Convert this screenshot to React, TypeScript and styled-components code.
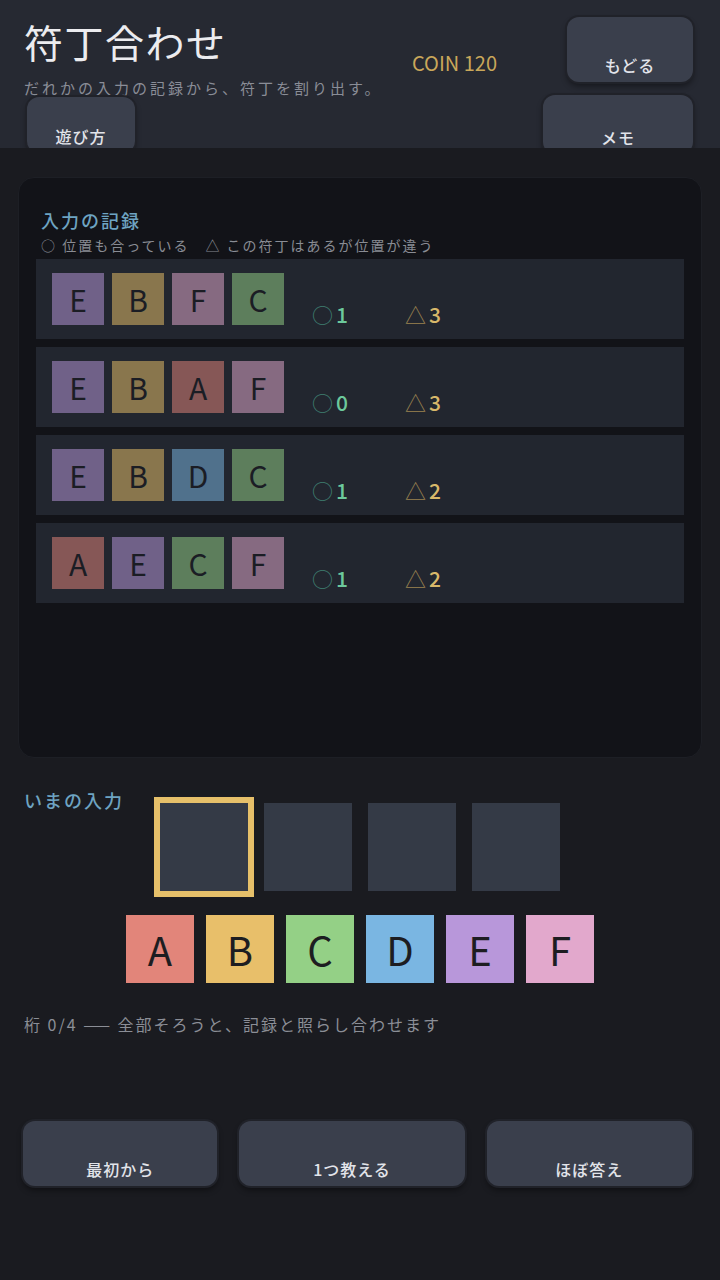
import React from 'react';
import styled, { createGlobalStyle } from 'styled-components';

const GlobalStyle = createGlobalStyle`
  html, body {
    margin: 0;
    padding: 0;
    background: #1a1b20;
  }
  body {
    font-family: "Noto Sans CJK JP", "Noto Sans", sans-serif;
    color: #e4e5ea;
  }
  * {
    box-sizing: border-box;
  }
`;

const Page = styled.div`
  width: 720px;
  min-height: 1280px;
  background: #1a1b20;
  display: flex;
  flex-direction: column;
`;

const Header = styled.header`
  height: 148px;
  overflow: hidden;
  background: #262932;
  padding: 17px 27px 0 24px;
`;

const HeaderTop = styled.div`
  display: flex;
  align-items: flex-start;
`;

const TitleBlock = styled.div`
  flex: 1;
  padding-top: 1px;
`;

const Title = styled.h1`
  margin: 0;
  font-size: 39px;
  line-height: 46px;
  font-weight: 400;
  letter-spacing: 1.5px;
  color: #ececef;
`;

const Subtitle = styled.p`
  margin: 13px 0 0;
  font-size: 15px;
  line-height: 22px;
  letter-spacing: 3px;
  color: #8a8d97;
`;

const Coin = styled.div`
  margin: 34px 70px 0 0;
  font-size: 20px;
  line-height: 24px;
  color: #c9a75a;
`;

const HeaderBottom = styled.div`
  display: flex;
  justify-content: space-between;
  align-items: flex-start;
  margin-top: -2px;
  padding-left: 3px;
`;

const Button = styled.button<{ $w?: number; $h: number; $up?: number }>`
  width: ${p => (p.$w ? `${p.$w}px` : 'auto')};
  height: ${p => p.$h}px;
  margin-top: ${p => -(p.$up ?? 0)}px;
  border: none;
  border-radius: 12px;
  background: #3a3f4c;
  box-shadow: 0 0 0 2px #202229, 0 4px 6px rgba(0, 0, 0, 0.45);
  color: #e2e4ea;
  font-family: inherit;
  font-size: 16px;
  line-height: 18px;
  font-weight: 500;
  letter-spacing: 1px;
  display: flex;
  align-items: flex-end;
  justify-content: center;
  padding: 0 0 8px;
`;

const Main = styled.main`
  display: flex;
  flex-direction: column;
`;

const HistoryPanel = styled.section`
  margin: 29px 18px 0;
  height: 581px;
  background: #121318;
  border: 1px solid #1d1f25;
  border-radius: 16px;
  padding: 30px 17px 0;
`;

const SectionLabel = styled.h2`
  margin: 0;
  font-size: 18px;
  line-height: 24px;
  font-weight: 500;
  letter-spacing: 2px;
  color: #6ea4c2;
`;

const PanelLabel = styled(SectionLabel)`
  margin-left: 5px;
`;

const Legend = styled.div`
  margin: 4px 0 0 5px;
  font-size: 14px;
  line-height: 18px;
  letter-spacing: 2px;
  color: #898c94;
  display: flex;
  gap: 16px;
`;

const Rows = styled.div`
  margin-top: 5px;
  display: flex;
  flex-direction: column;
  gap: 8px;
`;

const Row = styled.div`
  height: 80px;
  background: #22262f;
  padding: 14px 16px;
  display: flex;
  align-items: flex-end;
`;

const Tiles = styled.div`
  display: flex;
  gap: 8px;
`;

const Tile = styled.div<{ $color: string }>`
  width: 52px;
  height: 52px;
  background: ${p => p.$color};
  opacity: 0.52;
  color: #15151a;
  font-size: 30px;
  line-height: 52px;
  text-align: center;
`;

const Results = styled.div`
  margin-left: 28px;
  display: flex;
`;

const Result = styled.div`
  width: 93px;
  display: flex;
  align-items: baseline;
  gap: 3px;
  font-size: 21px;
  line-height: 21px;
`;

const Mark = styled.span<{ $color: string }>`
  color: ${p => p.$color};
`;

const Count = styled.span<{ $color: string }>`
  color: ${p => p.$color};
  font-weight: 500;
`;

const InputArea = styled.div`
  margin-top: 30px;
  padding: 0 24px;
  display: grid;
  grid-template-columns: 1fr auto 1fr;
  align-items: start;
`;

const Slots = styled.div`
  margin-top: 15px;
  display: flex;
  gap: 16px;
`;

const Slot = styled.div<{ $active?: boolean }>`
  width: 88px;
  height: 88px;
  background: #343a46;
  outline: ${p => (p.$active ? '6px solid #e6c06a' : 'none')};
`;

const Keys = styled.div`
  margin-top: 24px;
  display: flex;
  justify-content: center;
  gap: 12px;
`;

const Key = styled.button<{ $color: string }>`
  width: 68px;
  height: 68px;
  border: none;
  padding: 0;
  background: ${p => p.$color};
  color: #1d1d21;
  font-family: inherit;
  font-size: 40px;
  line-height: 68px;
`;

const Hint = styled.p`
  margin: 30px 0 0 24px;
  font-size: 16px;
  line-height: 22px;
  letter-spacing: 2px;
  color: #8b8e96;
`;

const Actions = styled.div`
  margin-top: 86px;
  padding: 0 28px 0 23px;
  display: grid;
  grid-template-columns: 194fr 225fr 205fr;
  gap: 22px;
`;

const COLORS: Record<string, string> = {
  A: '#e2857a',
  B: '#e8bf6a',
  C: '#94d086',
  D: '#7ab6e2',
  E: '#b897da',
  F: '#e2a8cc',
};

const history = [
  { code: ['E', 'B', 'F', 'C'], hit: 1, blow: 3 },
  { code: ['E', 'B', 'A', 'F'], hit: 0, blow: 3 },
  { code: ['E', 'B', 'D', 'C'], hit: 1, blow: 2 },
  { code: ['A', 'E', 'C', 'F'], hit: 1, blow: 2 },
];

const App: React.FC = () => {
  return (
    <Page>
      <GlobalStyle />
      <Header>
        <HeaderTop>
          <TitleBlock>
            <Title>符丁合わせ</Title>
            <Subtitle>だれかの入力の記録から、符丁を割り出す。</Subtitle>
          </TitleBlock>
          <Coin>COIN 120</Coin>
          <Button $w={126} $h={65}>もどる</Button>
        </HeaderTop>
        <HeaderBottom>
          <Button $w={108} $h={56}>遊び方</Button>
          <Button $w={150} $h={59} $up={2}>メモ</Button>
        </HeaderBottom>
      </Header>

      <Main>
        <HistoryPanel>
          <PanelLabel>入力の記録</PanelLabel>
          <Legend>
            <span>○ 位置も合っている</span>
            <span>△ この符丁はあるが位置が違う</span>
          </Legend>
          <Rows>
            {history.map((h, i) => (
              <Row key={i}>
                <Tiles>
                  {h.code.map((c, j) => (
                    <Tile key={j} $color={COLORS[c]}>{c}</Tile>
                  ))}
                </Tiles>
                <Results>
                  <Result>
                    <Mark $color="#3f7f6f">○</Mark>
                    <Count $color="#6cc99c">{h.hit}</Count>
                  </Result>
                  <Result>
                    <Mark $color="#9a8250">△</Mark>
                    <Count $color="#d8b86a">{h.blow}</Count>
                  </Result>
                </Results>
              </Row>
            ))}
          </Rows>
        </HistoryPanel>

        <InputArea>
          <SectionLabel>いまの入力</SectionLabel>
          <Slots>
            <Slot $active />
            <Slot />
            <Slot />
            <Slot />
          </Slots>
        </InputArea>

        <Keys>
          {Object.keys(COLORS).map(k => (
            <Key key={k} $color={COLORS[k]}>{k}</Key>
          ))}
        </Keys>

        <Hint>桁 0/4 —— 全部そろうと、記録と照らし合わせます</Hint>

        <Actions>
          <Button $h={65}>最初から</Button>
          <Button $h={65}>1つ教える</Button>
          <Button $h={65}>ほぼ答え</Button>
        </Actions>
      </Main>
    </Page>
  );
};

export default App;
